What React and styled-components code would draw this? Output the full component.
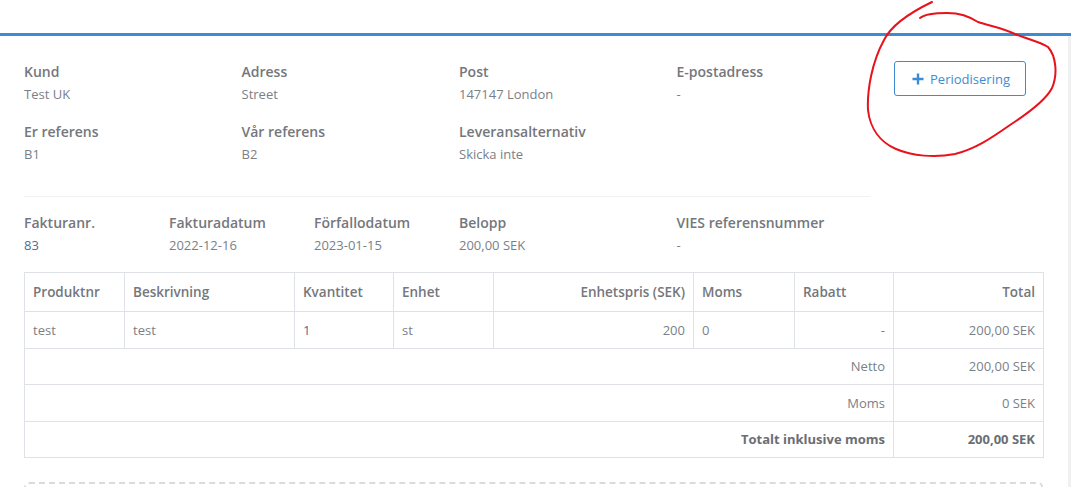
import React from 'react';
import styled, { createGlobalStyle } from 'styled-components';

const GlobalStyle = createGlobalStyle`
    body {
        margin: 0;
        background: #ffffff;
        font-family: "Open Sans", "Liberation Sans", sans-serif;
        color: #6b6e73;
    }
`

const Page = styled.div`
    position: relative;
    width: 1071px;
    height: 487px;
    overflow: hidden;
`

const TopBar = styled.div`
    height: 33px;
    border-bottom: 3px solid #3d8bd3;
`

const Body = styled.div`
    display: flex;
    height: 451px;
`

const Main = styled.div`
    flex: 0 0 1067px;
    padding: 25px 24px 0 24px;
    box-sizing: border-box;
`

const Aside = styled.div`
    flex: 1;
    background: #eef0f2;
`

const HeadRow = styled.div`
    display: flex;
    align-items: flex-start;
`

const InfoGrid = styled.div`
    display: grid;
    grid-template-columns: ${p => p.$cols};
    row-gap: 17px;
    width: 870px;
`

const Field = styled.div`
    display: flex;
    flex-direction: column;
    gap: 2px;
`

const Label = styled.div`
    font-size: 14px;
    line-height: 21px;
    font-weight: 600;
    color: #74777c;
    white-space: nowrap;
`

const Value = styled.div`
    font-size: 13px;
    line-height: 20px;
    color: ${p => (p.$link ? '#4f6d96' : '#7a7f88')};
    white-space: nowrap;
`

const AddButton = styled.button`
    display: flex;
    align-items: center;
    justify-content: center;
    gap: 6px;
    width: 132px;
    height: 35px;
    padding: 0 0 0 2px;
    border: 1px solid #3d8bd3;
    border-radius: 3px;
    background: #ffffff;
    color: #3d8bd3;
    font-family: inherit;
    font-size: 13px;
`

const Divider = styled.div`
    width: 846px;
    height: 1px;
    background: #f0f1f2;
    margin: 32px 0 15px 0;
`

const Table = styled.table`
    width: 1019px;
    margin-top: 17px;
    border-collapse: collapse;
    table-layout: fixed;
    font-size: 13px;
    color: #7a7f88;
`

const Th = styled.th`
    height: 38px;
    padding: 0 8px;
    border: 1px solid #dee1e5;
    font-weight: 600;
    font-size: 13.5px;
    color: #74777c;
    text-align: ${p => p.$align || 'left'};
`

const Td = styled.td`
    height: 35.5px;
    padding: 0 8px;
    border: 1px solid #dee1e5;
    text-align: ${p => p.$align || 'left'};
    font-weight: ${p => (p.$bold ? 700 : 400)};
    color: ${p => (p.$bold ? '#6b6e73' : p.$link ? '#4f6d96' : '#7a7f88')};
    white-space: nowrap;
`

const DropZone = styled.div`
    margin-top: 24px;
    width: 1019px;
    height: 60px;
    box-sizing: border-box;
    border: 2px dashed #d9dbde;
    border-radius: 5px;
`

const Annotation = styled.svg`
    position: absolute;
    left: 0;
    top: 0;
    pointer-events: none;
`

const Plus = () => (
    <svg width="12" height="12" viewBox="0 0 12 12">
        <path d="M6 0.5v11M0.5 6h11" stroke="#3d8bd3" strokeWidth="2.4" />
    </svg>
)

const topFields = [
    ['Kund', 'Test UK'],
    ['Adress', 'Street'],
    ['Post', '147147 London'],
    ['E-postadress', '-'],
    ['Er referens', 'B1'],
    ['Vår referens', 'B2'],
    ['Leveransalternativ', 'Skicka inte'],
]

const invoiceFields = [
    ['Fakturanr.', '83', true],
    ['Fakturadatum', '2022-12-16'],
    ['Förfallodatum', '2023-01-15'],
    ['Belopp', '200,00 SEK'],
    ['VIES referensnummer', '-'],
]

const colWidths = [100, 170, 99, 100, 200, 101, 99, 150]

const App = () => {
    return (
        <Page>
            <GlobalStyle />
            <TopBar />
            <Body>
                <Main>
                    <HeadRow>
                        <InfoGrid $cols="repeat(4, 217.5px)">
                            {topFields.map(([l, v]) => (
                                <Field key={l}>
                                    <Label>{l}</Label>
                                    <Value>{v}</Value>
                                </Field>
                            ))}
                        </InfoGrid>
                        <AddButton><Plus />Periodisering</AddButton>
                    </HeadRow>
                    <Divider />
                    <InfoGrid $cols="145px 145px 145px 217.5px 217.5px">
                        {invoiceFields.map(([l, v, link]) => (
                            <Field key={l}>
                                <Label>{l}</Label>
                                <Value $link={link}>{v}</Value>
                            </Field>
                        ))}
                    </InfoGrid>
                    <Table>
                        <colgroup>
                            {colWidths.map((w, i) => <col key={i} style={{ width: w }} />)}
                        </colgroup>
                        <thead>
                            <tr>
                                <Th>Produktnr</Th>
                                <Th>Beskrivning</Th>
                                <Th>Kvantitet</Th>
                                <Th>Enhet</Th>
                                <Th $align="right">Enhetspris (SEK)</Th>
                                <Th>Moms</Th>
                                <Th>Rabatt</Th>
                                <Th $align="right">Total</Th>
                            </tr>
                        </thead>
                        <tbody>
                            <tr>
                                <Td>test</Td>
                                <Td>test</Td>
                                <Td $link>1</Td>
                                <Td>st</Td>
                                <Td $align="right">200</Td>
                                <Td>0</Td>
                                <Td $align="right">-</Td>
                                <Td $align="right">200,00 SEK</Td>
                            </tr>
                            <tr>
                                <Td colSpan={7} $align="right">Netto</Td>
                                <Td $align="right">200,00 SEK</Td>
                            </tr>
                            <tr>
                                <Td colSpan={7} $align="right">Moms</Td>
                                <Td $align="right">0 SEK</Td>
                            </tr>
                            <tr>
                                <Td colSpan={7} $align="right" $bold>Totalt inklusive moms</Td>
                                <Td $align="right" $bold>200,00 SEK</Td>
                            </tr>
                        </tbody>
                    </Table>
                    <DropZone />
                </Main>
                <Aside />
            </Body>
            <Annotation width="1071" height="487" viewBox="0 0 1071 487">
                <path
                    d="M932 2 C905 15 890 28 884 40 C872 62 867 90 868 110 C870 128 880 142 896 149 C912 156 935 158 955 154 C975 149 990 139 1010 125 C1030 112 1046 100 1052 88 C1058 74 1056 56 1048 47 C1040 42 1030 40 1015 34 C1000 27 990 26 978 22 C968 16 960 13 947 13 C935 13 925 14 920 18"
                    fill="none"
                    stroke="#e8121b"
                    strokeWidth="2"
                    strokeLinecap="round"
                />
            </Annotation>
        </Page>
    );
};

export default App;
